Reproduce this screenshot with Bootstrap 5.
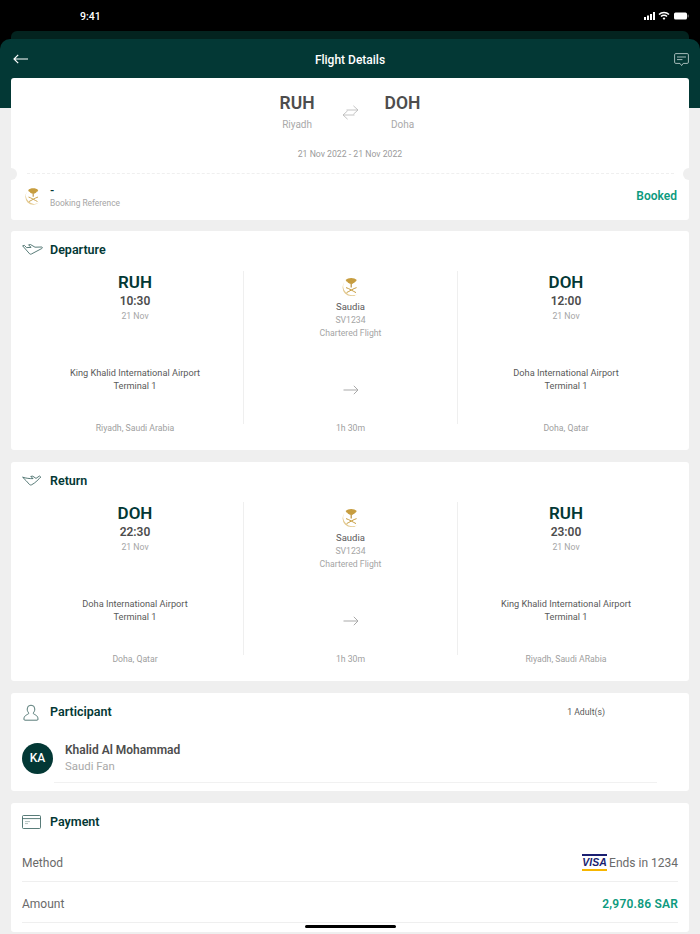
<!DOCTYPE html>
<html lang="en">

<head>
    <meta charset="UTF-8">
    <meta name="viewport" content="width=device-width, initial-scale=1.0">
    <title>Flight Details</title>
    <link href="https://cdn.jsdelivr.net/npm/bootstrap@5.3.0/dist/css/bootstrap.min.css" rel="stylesheet">
    <style>
        html, body {
            height: 934px;
            overflow: hidden;
        }

        body {
            background: #efefef;
            font-family: Roboto, "Noto Sans", sans-serif;
            color: #4d4d4d;
        }

        .status-strip {
            background: #000;
            height: 39px;
            color: #fff;
            padding: 9px 11px 0 80px;
            font-size: 10.5px;
            font-weight: 500;
            position: relative;
        }

        .back-sheet {
            position: absolute;
            left: 11px;
            right: 11px;
            bottom: 0;
            height: 8px;
            background: #03231f;
            border-radius: 6px 6px 0 0;
        }

        .head-wrap {
            background: linear-gradient(#000 12px, #033835 12px);
        }

        .head-bar {
            background: #033835;
            height: 69px;
            border-radius: 10px 10px 0 0;
            color: #fff;
            padding: 11px 11px 0 13px;
        }

        .head-bar .head-title {
            font-size: 12px;
            font-weight: 500;
            padding-top: 1px;
            margin-right: 2px;
        }

        .head-chat {
            margin-top: 3px;
        }

        .sheet {
            margin: -30px 11px 0;
            display: flex;
            flex-direction: column;
            gap: 12px;
        }

        .panel {
            background: #fff;
            border-radius: 3px;
        }

        .ticket {
            height: 142px;
            position: relative;
            overflow: hidden;
            margin-bottom: -1px;
        }

        .ticket .route {
            height: 96px;
            padding-top: 14px;
        }

        .ticket .iata {
            font-size: 17.5px;
            font-weight: 600;
            line-height: 22px;
            color: #4d4d4d;
        }

        .ticket .city-name {
            font-size: 10px;
            color: #a9a9a9;
            line-height: 14px;
            margin-top: 4px;
        }

        .ticket .date-range {
            font-size: 8.7px;
            color: #9b9b9b;
            text-align: center;
            line-height: 12px;
            margin-top: 16px;
        }

        .route-swap {
            margin: 13px 26px 0 27px;
        }

        .notch {
            position: absolute;
            top: 90px;
            width: 12px;
            height: 12px;
            border-radius: 50%;
            background: #efefef;
        }

        .notch-left {
            left: -6px;
        }

        .notch-right {
            right: -6px;
        }

        .tear {
            position: absolute;
            left: 16px;
            right: 15px;
            top: 95px;
            border-top: 1px dashed #efefef;
        }

        .ticket-foot {
            position: absolute;
            left: 13px;
            right: 12px;
            top: 105px;
        }

        .ref-dash {
            color: #033835;
            font-size: 11px;
            font-weight: 700;
            line-height: 13px;
            padding-top: 1px;
        }

        .ref-label {
            font-size: 8.4px;
            color: #a5a5a5;
            line-height: 12px;
        }

        .status-booked {
            color: #0d9a7e;
            font-size: 12px;
            font-weight: 600;
        }

        .leg {
            height: 219px;
            padding: 10px 16px 0 11px;
        }

        .section-head {
            color: #033835;
            font-size: 12.5px;
            font-weight: 600;
            line-height: 18px;
        }

        .section-icon {
            width: 28px;
            flex: none;
        }

        .leg-row {
            margin: 12px 0 0 0;
        }

        .leg-col {
            width: 216px;
            height: 165px;
            text-align: center;
            flex: none;
            position: relative;
        }

        .leg-col.first {
            margin-left: 5px;
        }

        .leg-col.mid {
            width: 213px;
        }

        .leg-rule {
            width: 1px;
            height: 153px;
            background: #efefef;
            flex: none;
        }

        .leg-iata {
            color: #033835;
            font-size: 17px;
            font-weight: 600;
            line-height: 20px;
            padding-top: 1px;
        }

        .leg-time {
            font-size: 12px;
            font-weight: 600;
            line-height: 16px;
            margin-top: 1px;
        }

        .leg-date {
            font-size: 8.7px;
            color: #a5a5a5;
            line-height: 12px;
            margin-top: 1px;
        }

        .leg-airport {
            font-size: 9.2px;
            line-height: 13px;
            color: #5a5a5a;
            position: absolute;
            left: 0;
            right: 0;
            top: 95px;
        }

        .leg-city {
            font-size: 8.7px;
            line-height: 12px;
            color: #a0a0a0;
            position: absolute;
            left: 0;
            right: 0;
            top: 151px;
        }

        .carrier-logo {
            display: block;
            margin: 6px auto 0;
        }

        .carrier-name {
            font-size: 9.5px;
            line-height: 12px;
            color: #5a5a5a;
            margin-top: 4px;
        }

        .carrier-sub {
            font-size: 8.7px;
            color: #a5a5a5;
            line-height: 12px;
            margin-top: 1px;
        }

        .leg-arrow {
            margin-top: 19px;
        }

        .people {
            height: 98px;
            padding: 10px 12px 0 11px;
        }

        .adult-count {
            font-size: 8.7px;
            color: #5a5a5a;
            margin-right: 72px;
            font-weight: 400;
        }

        .avatar {
            width: 31px;
            height: 31px;
            border-radius: 50%;
            background: #033835;
            color: #fff;
            font-size: 12px;
            font-weight: 500;
        }

        .person-row {
            margin-top: 21px;
            gap: 12px;
        }

        .person-name {
            font-size: 12px;
            font-weight: 600;
            line-height: 16px;
        }

        .person-role {
            font-size: 11.4px;
            color: #a9a9a9;
            line-height: 16px;
        }

        .people-rule {
            border-top: 1px solid #f1f1f1;
            margin: 8px 20px 0 32px;
        }

        .pay {
            height: 129px;
            padding: 10px 11px 0 11px;
        }

        .pay-row {
            font-size: 12px;
            color: #6a6a6a;
            height: 41px;
            padding-top: 3px;
            border-bottom: 1px solid #efefef;
        }

        .pay-row .amount {
            color: #0d9a7e;
            font-weight: 600;
            font-size: 12px;
            letter-spacing: .2px;
        }

        .pay-list {
            margin-top: 10px;
        }

        .card-end {
            gap: 2px;
        }

        .home-bar {
            position: fixed;
            left: 305px;
            top: 925px;
            width: 91px;
            height: 3px;
            border-radius: 2px;
            background: #000;
        }

        .status-icons {
            position: absolute;
            right: 11px;
            top: 11px;
        }
    </style>
</head>

<body>
    <svg width="0" height="0" class="d-block">
        <defs>
            <symbol id="saudia" viewBox="0 0 20 20">
                <path d="M3.6 4.4A9.4 9.4 0 0 0 4 16.6A9.4 9.4 0 0 0 17 16.4A9 9 0 0 1 5 15.4A8.4 8.4 0 0 1 3.6 4.4Z" fill="#e3c98f"/>
                <path d="M10.2 5V10.4" stroke="#b88f3a" stroke-width="1.2"/>
                <path d="M4.6 3C7 .2 13.4 .2 15.8 3C15 3.4 15.4 5 14 4.8C13.8 6.4 12.2 5.8 11.4 7C10.8 6.2 9.6 6.2 9 7C8.2 5.8 6.6 6.4 6.4 4.8C5 5 5.4 3.4 4.6 3Z" fill="#c79d3f"/>
                <path d="M5 10.6C8 11.4 12.4 14.4 15 15.6M15.6 10.6C12.6 11.4 8.2 14.4 5.6 15.6" stroke="#c79d3f" stroke-width="1" fill="none"/>
            </symbol>
            <symbol id="flight-arrow" viewBox="0 0 16 10">
                <path d="M.5 5H15M10.8 .8L15 5L10.8 9.2" fill="none" stroke="#a9a9a9" stroke-width="1"/>
            </symbol>
        </defs>
    </svg>

    <div class="status-strip">
        9:41
        <div class="back-sheet"></div>
        <svg class="status-icons" width="45" height="10" viewBox="0 0 45 10">
            <rect x="0" y="6" width="2" height="3" fill="#fff"/><rect x="3" y="4.5" width="2" height="4.5" fill="#fff"/><rect x="6" y="3" width="2" height="6" fill="#fff"/><rect x="9" y="1" width="2" height="8" fill="#fff"/>
            <path d="M15 3.6A7 7 0 0 1 25 3.6M17 5.6A4.2 4.2 0 0 1 23 5.6" fill="none" stroke="#fff" stroke-width="1.5"/><path d="M18.6 7.2L20 9L21.4 7.2A2 2 0 0 0 18.6 7.2Z" fill="#fff"/>
            <rect x="30" y="1.5" width="13" height="7" rx="1.5" fill="#fff"/><rect x="43.6" y="3.6" width="1" height="2.8" fill="#888"/>
        </svg>
    </div>

    <div class="head-wrap">
        <div class="head-bar d-flex justify-content-between align-items-start">
            <svg width="15" height="10" viewBox="0 0 15 10" class="mt-1"><path d="M15 5H1M5.2 .8L1 5L5.2 9.2" fill="none" stroke="#fff" stroke-width="1.2"/></svg>
            <div class="head-title">Flight Details</div>
            <svg width="15" height="14" viewBox="0 0 15 14" class="head-chat"><path d="M1.8.6H13.2A1.2 1.2 0 0 1 14.4 1.8V9.2A1.2 1.2 0 0 1 13.2 10.4H9.2L7.6 12.6L6 10.4H1.8A1.2 1.2 0 0 1 .6 9.2V1.8A1.2 1.2 0 0 1 1.8.6Z" fill="none" stroke="#b8c9c7" stroke-width=".9"/><path d="M3 4H12M3 6.6H8.4" stroke="#b8c9c7" stroke-width=".9"/></svg>
        </div>
    </div>

    <div class="sheet">
        <div class="panel ticket">
            <div class="route">
                <div class="d-flex justify-content-center">
                    <div class="text-center">
                        <div class="iata">RUH</div>
                        <div class="city-name">Riyadh</div>
                    </div>
                    <svg class="route-swap" width="17" height="15" viewBox="0 0 17 15"><path d="M4.5 5H16M11.4 .8L16 5L11.4 9.2M12.5 10H1M5.6 5.8L1 10L5.6 14.2" fill="none" stroke="#bdbdbd" stroke-width=".9"/></svg>
                    <div class="text-center">
                        <div class="iata">DOH</div>
                        <div class="city-name">Doha</div>
                    </div>
                </div>
                <div class="date-range">21 Nov 2022 - 21 Nov 2022</div>
            </div>
            <div class="notch notch-left"></div>
            <div class="notch notch-right"></div>
            <div class="tear"></div>
            <div class="ticket-foot d-flex justify-content-between align-items-center">
                <div class="d-flex align-items-center gap-2">
                    <svg width="18" height="19"><use href="#saudia"/></svg>
                    <div>
                        <div class="ref-dash">-</div>
                        <div class="ref-label">Booking Reference</div>
                    </div>
                </div>
                <div class="status-booked">Booked</div>
            </div>
        </div>

        <div class="panel leg">
            <div class="d-flex align-items-center section-head">
                <svg class="section-icon" height="12" viewBox="0 0 28 12"><path d="M.6 1.8L2.4 1.4L4.6 3.6L9 3.4L6.6 .8L8.6 .6L13 3.2L19.6 3C20.6 3.2 20.6 4.2 19.6 4.6L9.4 10C8.8 10.4 8 10.2 7.6 9.8Z" fill="none" stroke="#2e5a57" stroke-width=".8"/></svg>
                <span>Departure</span>
            </div>
            <div class="d-flex leg-row">
                <div class="leg-col first">
                    <div class="leg-iata">RUH</div>
                    <div class="leg-time">10:30</div>
                    <div class="leg-date">21 Nov</div>
                    <div class="leg-airport">King Khalid International Airport<br>Terminal 1</div>
                    <div class="leg-city">Riyadh, Saudi Arabia</div>
                </div>
                <div class="leg-rule"></div>
                <div class="leg-col mid">
                    <svg width="20" height="20" class="carrier-logo"><use href="#saudia"/></svg>
                    <div class="carrier-name">Saudia</div>
                    <div class="carrier-sub">SV1234</div>
                    <div class="carrier-sub">Chartered Flight</div>
                    <div class="leg-airport"><svg width="16" height="10" class="leg-arrow"><use href="#flight-arrow"/></svg></div>
                    <div class="leg-city">1h 30m</div>
                </div>
                <div class="leg-rule"></div>
                <div class="leg-col">
                    <div class="leg-iata">DOH</div>
                    <div class="leg-time">12:00</div>
                    <div class="leg-date">21 Nov</div>
                    <div class="leg-airport">Doha International Airport<br>Terminal 1</div>
                    <div class="leg-city">Doha, Qatar</div>
                </div>
            </div>
        </div>

        <div class="panel leg">
            <div class="d-flex align-items-center section-head">
                <svg class="section-icon" height="12" viewBox="0 0 28 12"><path d="M.6 2.2C4 3.2 7.6 3.8 11 3.6L8.8 1.4L10.8 1.2L14 3.4L17.4 1L18.8 2C17 3.8 13.4 8 9.6 9.8C8.8 10.2 8 10 7.4 9.4C5.4 7 3 4.4.6 2.2Z" fill="none" stroke="#2e5a57" stroke-width=".8"/></svg>
                <span>Return</span>
            </div>
            <div class="d-flex leg-row">
                <div class="leg-col first">
                    <div class="leg-iata">DOH</div>
                    <div class="leg-time">22:30</div>
                    <div class="leg-date">21 Nov</div>
                    <div class="leg-airport">Doha International Airport<br>Terminal 1</div>
                    <div class="leg-city">Doha, Qatar</div>
                </div>
                <div class="leg-rule"></div>
                <div class="leg-col mid">
                    <svg width="20" height="20" class="carrier-logo"><use href="#saudia"/></svg>
                    <div class="carrier-name">Saudia</div>
                    <div class="carrier-sub">SV1234</div>
                    <div class="carrier-sub">Chartered Flight</div>
                    <div class="leg-airport"><svg width="16" height="10" class="leg-arrow"><use href="#flight-arrow"/></svg></div>
                    <div class="leg-city">1h 30m</div>
                </div>
                <div class="leg-rule"></div>
                <div class="leg-col">
                    <div class="leg-iata">RUH</div>
                    <div class="leg-time">23:00</div>
                    <div class="leg-date">21 Nov</div>
                    <div class="leg-airport">King Khalid International Airport<br>Terminal 1</div>
                    <div class="leg-city">Riyadh, Saudi ARabia</div>
                </div>
            </div>
        </div>

        <div class="panel people">
            <div class="d-flex align-items-center section-head">
                <svg class="section-icon" height="17" viewBox="0 0 28 17"><path d="M9 1.2A3.8 3.8 0 0 1 12.8 5C12.8 7 12 8 11.2 9C11 9.8 12 10 13.6 11C15.2 12 16 13 16 15.2C16 16 15.6 16.2 15 16.2H3C2.4 16.2 1.9 16 1.9 15.2C1.9 13 2.8 12 4.4 11C6 10 7 9.8 6.8 9C6 8 5.2 7 5.2 5A3.8 3.8 0 0 1 9 1.2Z" fill="none" stroke="#2e5a57" stroke-width=".8"/></svg>
                <span>Participant</span>
                <span class="adult-count ms-auto">1 Adult(s)</span>
            </div>
            <div class="d-flex align-items-center person-row">
                <div class="avatar d-flex align-items-center justify-content-center">KA</div>
                <div>
                    <div class="person-name">Khalid Al Mohammad</div>
                    <div class="person-role">Saudi Fan</div>
                </div>
            </div>
            <div class="people-rule"></div>
        </div>

        <div class="panel pay">
            <div class="d-flex align-items-center section-head">
                <svg class="section-icon" height="14" viewBox="0 0 28 14"><rect x=".5" y=".5" width="18" height="13" rx="1" fill="none" stroke="#2e5a57" stroke-width=".8"/><path d="M.5 3.6H18.5" stroke="#2e5a57" stroke-width=".8"/><path d="M3 6.6H8M3 8.6H6" stroke="#9db1af" stroke-width=".8"/></svg>
                <span>Payment</span>
            </div>
            <div class="pay-list">
                <div class="pay-row d-flex justify-content-between align-items-center">
                    <span>Method</span>
                    <span class="d-flex align-items-center card-end">
                        <svg width="25" height="17" viewBox="0 0 25 17"><rect width="25" height="2" fill="#1a1f71"/><rect y="15" width="25" height="2" fill="#f7b600"/><text x="12.5" y="12.2" text-anchor="middle" font-family="Liberation Sans" font-size="10.5" font-weight="700" font-style="italic" fill="#1a1f71">VISA</text></svg>
                        Ends in 1234
                    </span>
                </div>
                <div class="pay-row d-flex justify-content-between align-items-center">
                    <span>Amount</span>
                    <span class="amount">2,970.86 SAR</span>
                </div>
            </div>
        </div>
    </div>

    <div class="home-bar"></div>

    <script src="https://cdn.jsdelivr.net/npm/bootstrap@5.3.0/dist/js/bootstrap.bundle.min.js"></script>
</body>

</html>
